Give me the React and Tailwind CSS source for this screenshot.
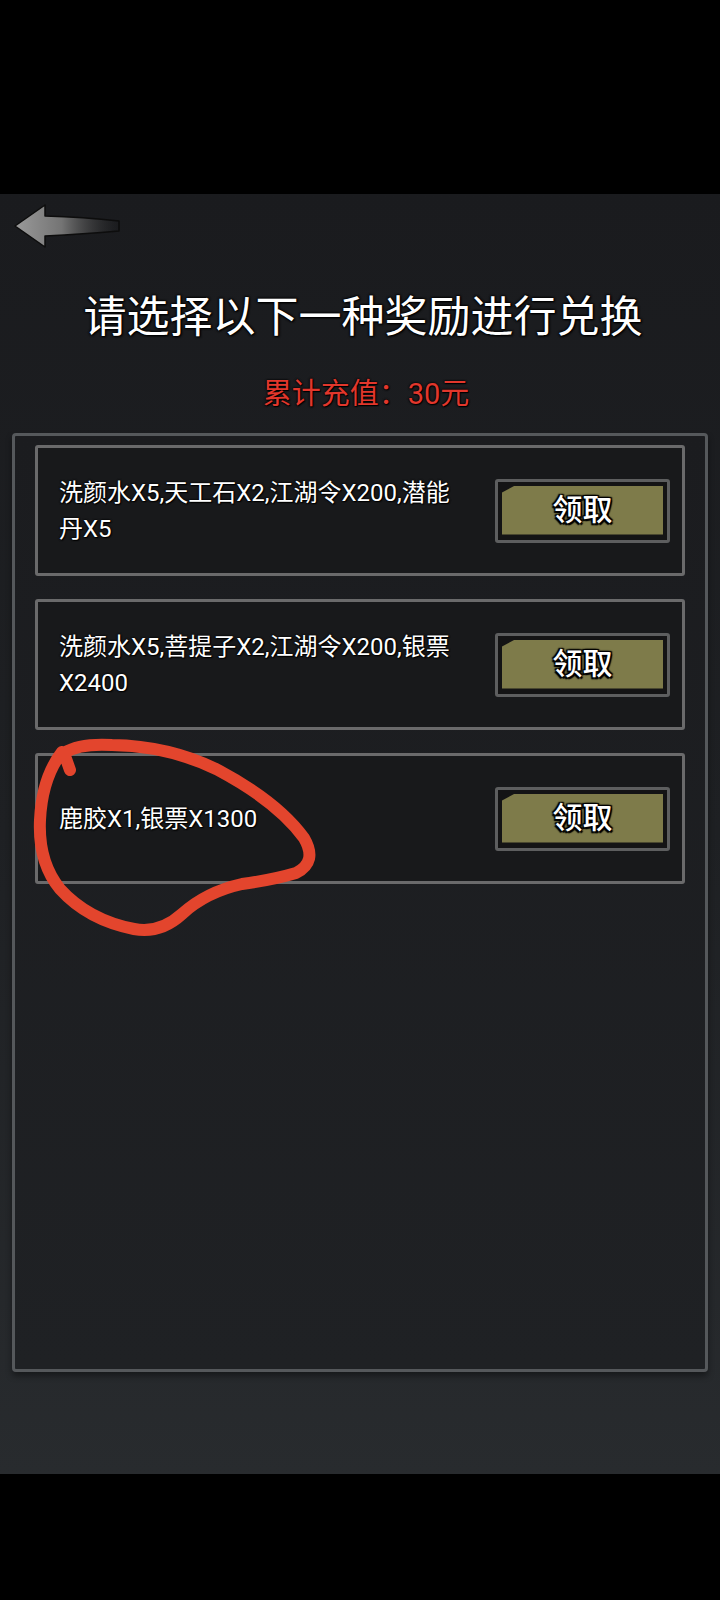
const rewards = [
  '洗颜水X5,天工石X2,江湖令X200,潜能丹X5',
  '洗颜水X5,菩提子X2,江湖令X200,银票X2400',
  '鹿胶X1,银票X1300',
];

function BackArrow() {
  return (
    <svg width="106" height="44" viewBox="0 0 106 44">
      <defs>
        <linearGradient id="arrowFill" x1="0" y1="0" x2="1" y2="0">
          <stop offset="0" stopColor="#9a9a9a" />
          <stop offset="0.45" stopColor="#747474" />
          <stop offset="1" stopColor="#3a3a3a" stopOpacity="0" />
        </linearGradient>
      </defs>
      <path
        d="M1 22 L31 1 L31 12 Q70 13 105 17 L105 27 Q70 30 31 32 L31 43 Z"
        fill="url(#arrowFill)"
        stroke="#0d0d0d"
        strokeWidth="1.5"
        strokeLinejoin="round"
      />
    </svg>
  );
}

function ClaimButton() {
  return (
    <div className="w-[175px] h-[64px] rounded-[3px] border-[3px] border-[#5d5e5f] bg-[#141415] pt-[4px] pb-[5px] px-[4px] shrink-0">
      <div className="h-full bg-[#7e7b4a] [clip-path:polygon(13px_0,100%_0,100%_100%,0_100%,0_7px)] flex items-center justify-center">
        <span className="text-[30px] leading-none text-white font-medium [text-shadow:0_0_2px_#000,0_0_2px_#000,0_0_3px_#000,1.5px_1.5px_1px_#000,-1.5px_-1.5px_1px_#000,1.5px_-1.5px_1px_#000,-1.5px_1.5px_1px_#000]">
          领取
        </span>
      </div>
    </div>
  );
}

function RewardCard({ text }) {
  return (
    <div className="h-[131px] rounded-[3px] border-[3px] border-[#6a6a6b] bg-[#18191b] flex items-center justify-between pl-[21px] pr-[12px]">
      <p className="w-[400px] text-[24px] leading-[36px] text-white [text-shadow:0_0_2px_#000,0_0_2px_#000,1px_1px_1px_#000]">
        {text}
      </p>
      <ClaimButton />
    </div>
  );
}

export default function App() {
  return (
    <div className="w-[720px] h-[1600px] bg-black flex flex-col font-['Roboto','Noto_Sans_CJK_SC',sans-serif]">
      <div className="h-[194px] bg-black" />
      <div className="relative h-[1280px] bg-gradient-to-b from-[#1a1b1e] via-[#1e2023] to-[#282b2e] flex flex-col">
        <div className="h-[56px] pt-[10px] pl-[14px]">
          <BackArrow />
        </div>
        <h1 className="mt-[46px] h-[43px] text-[43px] leading-[43px] text-center text-white pl-[6px] [text-shadow:0_0_2px_#000,0_0_2px_#000,0_0_3px_#000,1px_1px_2px_#000]">
          请选择以下一种奖励进行兑换
        </h1>
        <p className="mt-[41px] h-[29px] text-[29px] leading-[29px] text-center text-[#e2372c] pl-[12px] [text-shadow:0_0_2px_#000,0_0_2px_#000,1px_1px_1px_#000]">
          累计充值：30元
        </p>
        <div className="mt-[24px] mx-[12px] h-[939px] rounded-[4px] border-[3px] border-[#55585b] bg-gradient-to-b from-[#1b1c1f] to-[#1f2124] pt-[9px] px-[20px] flex flex-col gap-[23px] shadow-[0_4px_6px_rgba(0,0,0,0.4)]">
          {rewards.map((r) => (
            <RewardCard key={r} text={r} />
          ))}
        </div>

        {/* hand-drawn annotation circle */}
        <svg
          className="absolute left-0 top-0 pointer-events-none"
          width="360"
          height="800"
          viewBox="0 194 360 800"
        >
          <path
            d="M70 770 L64 753 Q80 743 112 745 Q170 746 218 770 Q278 802 304 838 Q318 862 296 873 Q272 880 242 884 Q206 892 182 914 Q160 934 134 929 Q88 920 60 889 Q38 862 40 820 Q42 778 62 752"
            fill="none"
            stroke="#e3452d"
            strokeWidth="12"
            strokeLinecap="round"
            strokeLinejoin="round"
          />
        </svg>
      </div>
      <div className="flex-1 bg-black" />
    </div>
  );
}
